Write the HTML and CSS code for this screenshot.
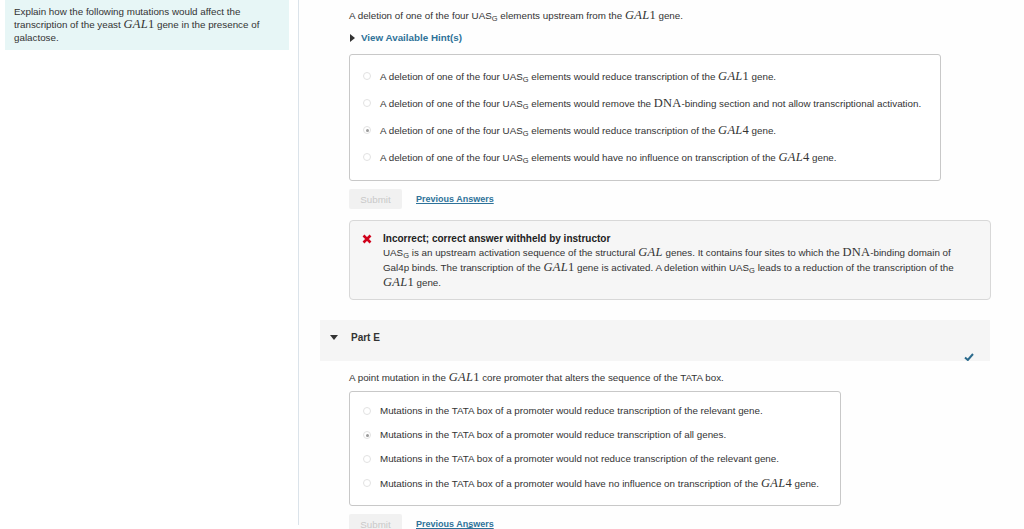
FILE: index.html
```html
<!DOCTYPE html>
<html>
<head>
<meta charset="utf-8">
<link rel="stylesheet" href="styles.css">
</head>
<body>
<div class="page">
  <aside class="prompt">
    <p>Explain how the following mutations would affect the transcription of the yeast <span class="mi">GAL</span><span class="mn">1</span> gene in the presence of galactose.</p>
  </aside>
  <div class="divider"></div>
  <main class="content">
    <section class="part">
      <p class="question">A deletion of one of the four UAS<sub>G</sub> elements upstream from the <span class="mi">GAL</span><span class="mn">1</span> gene.</p>
      <div class="hint"><span class="tri-right"></span><span>View Available Hint(s)</span></div>
      <div class="options opts-a">
        <label class="opt"><span class="radio"></span><span class="opt-text">A deletion of one of the four UAS<sub>G</sub> elements would reduce transcription of the <span class="mi">GAL</span><span class="mn">1</span> gene.</span></label>
        <label class="opt"><span class="radio"></span><span class="opt-text">A deletion of one of the four UAS<sub>G</sub> elements would remove the <span class="mr">DNA</span>-binding section and not allow transcriptional activation.</span></label>
        <label class="opt"><span class="radio checked"></span><span class="opt-text">A deletion of one of the four UAS<sub>G</sub> elements would reduce transcription of the <span class="mi">GAL</span><span class="mn">4</span> gene.</span></label>
        <label class="opt"><span class="radio"></span><span class="opt-text">A deletion of one of the four UAS<sub>G</sub> elements would have no influence on transcription of the <span class="mi">GAL</span><span class="mn">4</span> gene.</span></label>
      </div>
      <div class="actions">
        <button class="submit">Submit</button>
        <a class="prev">Previous Answers</a>
      </div>
      <div class="feedback">
        <svg class="xicon" viewBox="0 0 10 10" width="10" height="10"><path d="M1.5 1.5 L8.5 8.5 M8.5 1.5 L1.5 8.5" stroke="#d0021b" stroke-width="2.6"/></svg>
        <div class="fb-text">
          <div class="fb-title">Incorrect; correct answer withheld by instructor</div>
          <div class="fb-body">UAS<sub>G</sub> is an upstream activation sequence of the structural <span class="mi">GAL</span> genes. It contains four sites to which the <span class="mr">DNA</span>-binding domain of Gal4p binds. The transcription of the <span class="mi">GAL</span><span class="mn">1</span> gene is activated. A deletion within UAS<sub>G</sub> leads to a reduction of the transcription of the <span class="mi">GAL</span><span class="mn">1</span> gene.</div>
        </div>
      </div>
    </section>

    <div class="part-head">
      <span class="tri-down"></span>
      <span class="part-title">Part E</span>
      <svg class="check" viewBox="0 0 10 8" width="10" height="8"><path d="M1 4.5 L3.8 7 L9 1" fill="none" stroke="#2b6a8c" stroke-width="2"/></svg>
    </div>

    <section class="part">
      <p class="question q2">A point mutation in the <span class="mi">GAL</span><span class="mn">1</span> core promoter that alters the sequence of the TATA box.</p>
      <div class="options opts-b">
        <label class="opt"><span class="radio"></span><span class="opt-text">Mutations in the TATA box of a promoter would reduce transcription of the relevant gene.</span></label>
        <label class="opt"><span class="radio checked"></span><span class="opt-text">Mutations in the TATA box of a promoter would reduce transcription of all genes.</span></label>
        <label class="opt"><span class="radio"></span><span class="opt-text">Mutations in the TATA box of a promoter would not reduce transcription of the relevant gene.</span></label>
        <label class="opt"><span class="radio"></span><span class="opt-text">Mutations in the TATA box of a promoter would have no influence on transcription of the <span class="mi">GAL</span><span class="mn">4</span> gene.</span></label>
      </div>
      <div class="actions">
        <button class="submit">Submit</button>
        <span class="blob"></span>
        <a class="prev">Previous Answers</a>
      </div>
    </section>
  </main>
</div>
</body>
</html>
```

FILE: styles.css
```css
html, body {
  margin: 0;
  padding: 0;
  background: #fff;
  overflow: hidden;
}
body {
  font-family: "Liberation Sans", Arial, sans-serif;
  font-size: 9.8px;
  color: #333;
  width: 1024px;
  height: 529px;
}
.page {
  display: flex;
  align-items: flex-start;
  height: 529px;
}
.prompt {
  width: 284px;
  margin-left: 5px;
  background: #e7f6f6;
  box-sizing: border-box;
  padding: 5px 10px 6px 9px;
  flex: none;
}
.prompt p {
  margin: 0;
  line-height: 13px;
  color: #333;
}
.divider {
  flex: none;
  width: 1px;
  height: 525px;
  margin-left: 9px;
  background: #dbe3ea;
}
.content {
  flex: 1;
  padding-left: 21px;
  padding-right: 33px;
  background: #fefefe;
  height: 529px;
}
.part {
  padding-left: 29px;
}
.question {
  margin: 0;
  padding-top: 9px;
  line-height: 13px;
}
.mi {
  font-family: "Liberation Serif", "Times New Roman", serif;
  font-style: italic;
  font-size: 12.5px;
  letter-spacing: 0.3px;
}
.mn, .mr {
  font-family: "Liberation Serif", "Times New Roman", serif;
  font-size: 12.5px;
}
.mr {
  letter-spacing: 0.2px;
}
sub {
  font-size: 7.5px;
  vertical-align: -2px;
  line-height: 0;
}
.hint {
  margin-top: 10px;
  display: flex;
  align-items: center;
  font-weight: bold;
  color: #2e7299;
  line-height: 12px;
}
.tri-right {
  width: 0;
  height: 0;
  border-top: 4px solid transparent;
  border-bottom: 4px solid transparent;
  border-left: 5px solid #333;
  margin-left: 1px;
  margin-right: 6px;
}
.options {
  margin-top: 10px;
  border: 1px solid #c8c8c8;
  border-radius: 3px;
  background: #fff;
  display: flex;
  flex-direction: column;
  box-sizing: border-box;
}
.opts-a {
  width: 592px;
  padding: 13px 0 15px 13px;
  gap: 11px;
  height: 127px;
}
.opts-b {
  width: 492px;
  padding: 11px 0 14px 13px;
  gap: 8px;
  height: 115px;
  margin-top: 7px;
}
.opt {
  display: flex;
  align-items: center;
  height: 16px;
  white-space: nowrap;
  color: #333;
}
.opt-text {
  line-height: 16px;
}
.radio {
  flex: none;
  width: 8px;
  height: 8px;
  border: 1px solid #e2e2e2;
  border-radius: 50%;
  margin-right: 9px;
  box-sizing: border-box;
  display: flex;
  align-items: center;
  justify-content: center;
  background: #fff;
}
.radio.checked::after {
  content: "";
  width: 3px;
  height: 3px;
  border-radius: 50%;
  background: #9a9a9a;
}
.actions {
  display: flex;
  align-items: center;
  margin-top: 8px;
  height: 20px;
  position: relative;
}
.submit {
  width: 53px;
  height: 20px;
  border: none;
  border-radius: 2px;
  background: #f1f1f1;
  color: #c9c9c9;
  font-family: "Liberation Sans", Arial, sans-serif;
  font-size: 9.8px;
  padding: 0;
}
.prev {
  margin-left: 14px;
  font-weight: bold;
  color: #2e7299;
  text-decoration: underline;
  font-size: 9px;
  position: relative;
}
.blob {
  position: absolute;
  left: 114px;
  top: 13px;
  width: 14px;
  height: 14px;
  border-radius: 50%;
  background: #2e7299;
}
.feedback {
  margin-top: 11px;
  width: 642px;
  box-sizing: border-box;
  height: 80px;
  background: #f6f6f6;
  border: 1px solid #d8d8d8;
  border-radius: 4px;
  display: flex;
  align-items: flex-start;
  padding: 12px 26px 0 12px;
}
.xicon {
  flex: none;
  margin-top: 1px;
  margin-right: 11px;
}
.fb-title {
  font-weight: bold;
  font-size: 10px;
  line-height: 12px;
  color: #222;
}
.fb-body {
  line-height: 14px;
  color: #333;
}
.part-head {
  margin-top: 20px;
  width: 670px;
  height: 41px;
  background: #f5f5f5;
  display: flex;
  align-items: center;
  position: relative;
}
.tri-down {
  width: 0;
  height: 0;
  border-left: 4px solid transparent;
  border-right: 4px solid transparent;
  border-top: 5px solid #333;
  margin-left: 10px;
  margin-right: 13px;
  margin-top: -7px;
}
.part-title {
  font-weight: bold;
  font-size: 10px;
  color: #333;
  margin-top: -7px;
}
.check {
  position: absolute;
  right: 16px;
  bottom: 0;
}
.q2 {
  padding-top: 10px;
}
```
